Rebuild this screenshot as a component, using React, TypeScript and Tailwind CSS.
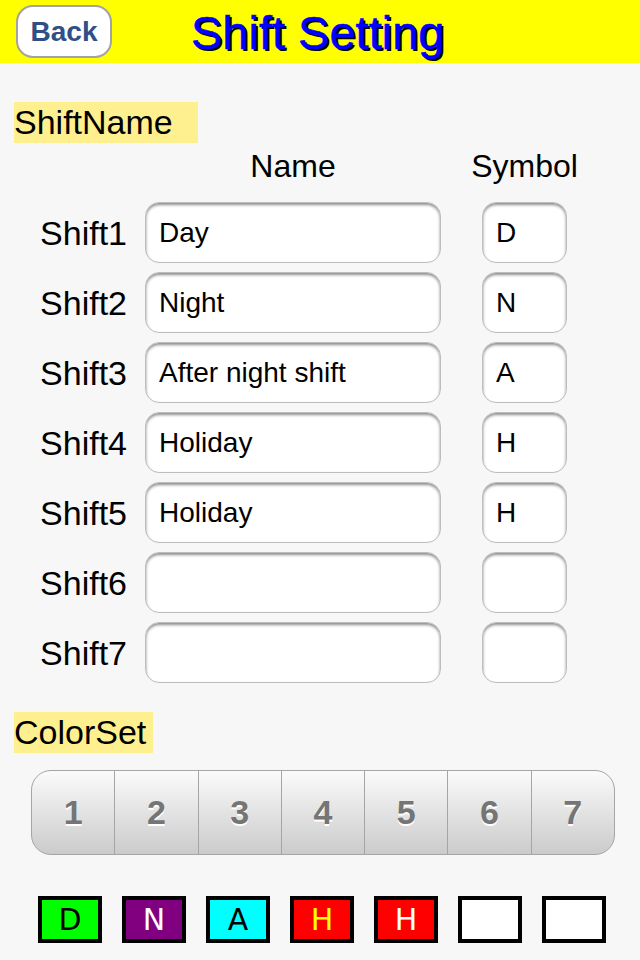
import React from 'react';

const shifts = [
  { label: 'Shift1', name: 'Day', symbol: 'D' },
  { label: 'Shift2', name: 'Night', symbol: 'N' },
  { label: 'Shift3', name: 'After night shift', symbol: 'A' },
  { label: 'Shift4', name: 'Holiday', symbol: 'H' },
  { label: 'Shift5', name: 'Holiday', symbol: 'H' },
  { label: 'Shift6', name: '', symbol: '' },
  { label: 'Shift7', name: '', symbol: '' },
];

const swatches = [
  { text: 'D', cls: 'bg-[#00ff00] text-black' },
  { text: 'N', cls: 'bg-[#800080] text-white' },
  { text: 'A', cls: 'bg-[#00ffff] text-black' },
  { text: 'H', cls: 'bg-[#ff0000] text-[#ffff00]' },
  { text: 'H', cls: 'bg-[#ff0000] text-white' },
  { text: '', cls: 'bg-white' },
  { text: '', cls: 'bg-white' },
];

const fieldCls =
  'h-[61px] bg-white rounded-[14px] border border-[#bdbdbd] shadow-[inset_0_2px_3px_rgba(0,0,0,0.45)] flex items-center pl-[13px] text-[28px] text-black';

const App: React.FC = () => {
  return (
    <div className="w-[640px] h-[960px] bg-[#f7f7f7] overflow-hidden font-['Liberation_Sans',Arial,sans-serif]">
      {/* header */}
      <header className="h-[63px] bg-[#ffff00] flex items-center">
        <button className="ml-[16px] w-[96px] h-[53px] rounded-[17px] bg-white border-2 border-[#a3a3a3] text-[28px] font-bold text-[#2f4f86] leading-none">
          Back
        </button>
        <h1 className="ml-[79px] mt-[1px] text-[47px] text-[#0000ff] leading-none [text-shadow:2px_2px_0_#000] [-webkit-text-stroke:0.6px_#0000ff]">
          Shift Setting
        </h1>
      </header>

      {/* shift names */}
      <div className="mt-[39px] ml-[14px] w-[184px] h-[41px] bg-[#fff08f] text-[34px] leading-[41px] text-black">
        ShiftName
      </div>

      <div className="flex h-[59px] items-center pb-[13px] text-[32px] text-black">
        <div className="w-[145px]" />
        <div className="w-[296px] flex justify-center whitespace-nowrap">Name</div>
        <div className="w-[41px]" />
        <div className="w-[85px] flex justify-center whitespace-nowrap">Symbol</div>
      </div>

      <div className="flex flex-col gap-[9px]">
        {shifts.map((s) => (
          <div key={s.label} className="flex items-center">
            <div className="w-[127px] text-right text-[34px] text-black pt-[2px]">{s.label}</div>
            <div className={`ml-[18px] w-[296px] ${fieldCls}`}>{s.name}</div>
            <div className={`ml-[41px] w-[85px] ${fieldCls}`}>{s.symbol}</div>
          </div>
        ))}
      </div>

      {/* color set */}
      <div className="mt-[29px] ml-[14px] w-[139px] h-[41px] bg-[#fff08f] text-[34px] leading-[41px] text-black">
        ColorSet
      </div>

      <div className="mt-[17px] ml-[31px] w-[584px] h-[85px] flex rounded-[20px] border border-[#a5a5a5] overflow-hidden bg-gradient-to-b from-[#fbfbfb] to-[#cbcbcb]">
        {[1, 2, 3, 4, 5, 6, 7].map((n, i) => (
          <div
            key={n}
            className={`flex-1 flex items-center justify-center text-[34px] font-bold text-[#757575] [text-shadow:0_2px_0_#fff] ${
              i > 0 ? 'border-l border-[#a5a5a5]' : ''
            }`}
          >
            {n}
          </div>
        ))}
      </div>

      <div className="mt-[41px] ml-[38px] flex gap-[20px]">
        {swatches.map((w, i) => (
          <div
            key={i}
            className={`w-[64px] h-[47px] border-4 border-black flex items-center justify-center text-[30px] leading-none font-['DejaVu_Sans',sans-serif] ${w.cls}`}
          >
            {w.text}
          </div>
        ))}
      </div>
    </div>
  );
};

export default App;
